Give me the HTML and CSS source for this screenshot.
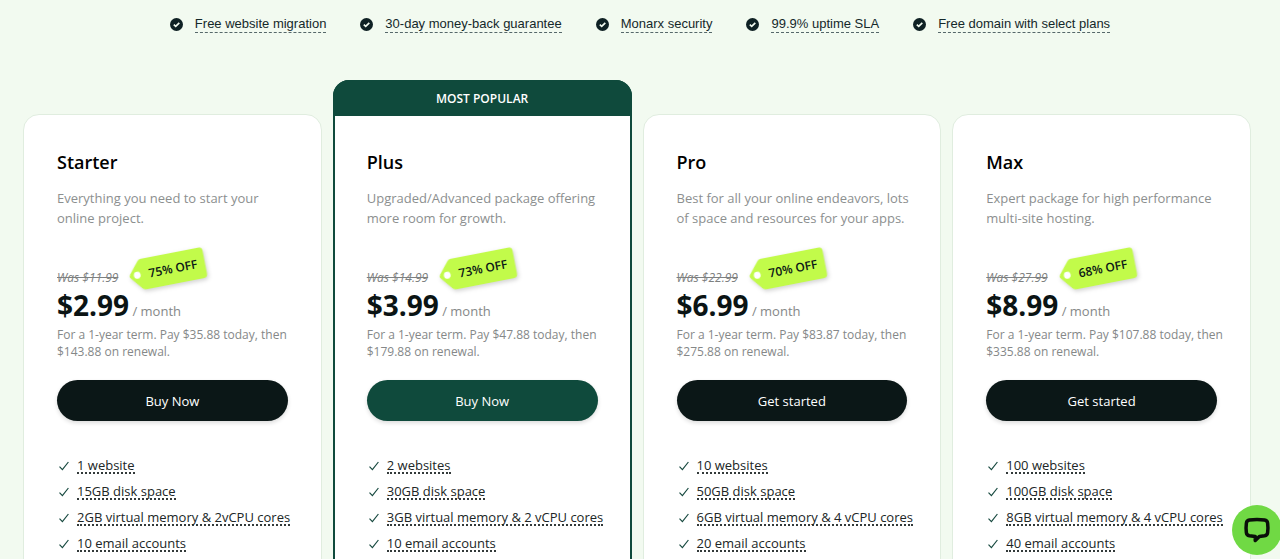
FILE: index.html
```html
<!DOCTYPE html>
<html lang="en">
<head>
<meta charset="utf-8">
<meta name="viewport" content="width=device-width, initial-scale=1">
<title>Hosting plans</title>
<link rel="stylesheet" href="styles.css">
</head>
<body>
<svg class="sprite" aria-hidden="true">
  <symbol id="badge-check" viewBox="0 0 13 13">
    <circle cx="6.5" cy="6.5" r="6.5" fill="#0f2124"/>
    <path d="M3.800 6.700l1.900 1.700L9.300 4.900" fill="none" stroke="#f2faf0" stroke-width="1.700"/>
  </symbol>
  <symbol id="tick" viewBox="0 0 12 12">
    <path d="M1.500 6.600l2.900 3L10.400 2" fill="none" stroke="#17493f" stroke-width="1.200"/>
  </symbol>
  <symbol id="tag" viewBox="0 0 76 32">
    <path d="M14.500 1H72q3.500 0 3.500 3.500V27.500q0 3.500-3.500 3.500H14.500q-2 0-3.300-1.700L1.800 18q-1.600-2 0-4L11.200 2.700q1.300-1.700 3.300-1.700z" fill="#c2fb4a"/>
    <circle cx="8.500" cy="16" r="3.300" fill="#fff"/>
  </symbol>
</svg>
<ul class="perks">
  <li><svg><use href="#badge-check"/></svg><span>Free website migration</span></li>
  <li><svg><use href="#badge-check"/></svg><span>30-day money-back guarantee</span></li>
  <li><svg><use href="#badge-check"/></svg><span>Monarx security</span></li>
  <li><svg><use href="#badge-check"/></svg><span>99.9% uptime SLA</span></li>
  <li><svg><use href="#badge-check"/></svg><span>Free domain with select plans</span></li>
</ul>
<main class="plans">
  <section class="plan">
    <h2>Starter</h2>
    <p class="summary">Everything you need to start your online project.</p>
    <div class="deal"><s>Was $11.99</s><span class="tag"><svg><use href="#tag"/></svg><b>75% OFF</b></span></div>
    <p class="price"><strong>$2.99</strong> / month</p>
    <p class="term">For a 1-year term. Pay $35.88 today, then $143.88 on renewal.</p>
    <button class="buy" type="button">Buy Now</button>
    <ul class="features">
      <li><svg><use href="#tick"/></svg><span>1 website</span></li>
      <li><svg><use href="#tick"/></svg><span>15GB disk space</span></li>
      <li><svg><use href="#tick"/></svg><span>2GB virtual memory &amp; 2vCPU cores</span></li>
      <li><svg><use href="#tick"/></svg><span>10 email accounts</span></li>
    </ul>
  </section>
  <section class="plan popular">
    <p class="ribbon">MOST POPULAR</p>
    <h2>Plus</h2>
    <p class="summary">Upgraded/Advanced package offering more room for growth.</p>
    <div class="deal"><s>Was $14.99</s><span class="tag"><svg><use href="#tag"/></svg><b>73% OFF</b></span></div>
    <p class="price"><strong>$3.99</strong> / month</p>
    <p class="term">For a 1-year term. Pay $47.88 today, then $179.88 on renewal.</p>
    <button class="buy" type="button">Buy Now</button>
    <ul class="features">
      <li><svg><use href="#tick"/></svg><span>2 websites</span></li>
      <li><svg><use href="#tick"/></svg><span>30GB disk space</span></li>
      <li><svg><use href="#tick"/></svg><span>3GB virtual memory &amp; 2 vCPU cores</span></li>
      <li><svg><use href="#tick"/></svg><span>10 email accounts</span></li>
    </ul>
  </section>
  <section class="plan">
    <h2>Pro</h2>
    <p class="summary">Best for all your online endeavors, lots of space and resources for your apps.</p>
    <div class="deal"><s>Was $22.99</s><span class="tag"><svg><use href="#tag"/></svg><b>70% OFF</b></span></div>
    <p class="price"><strong>$6.99</strong> / month</p>
    <p class="term">For a 1-year term. Pay $83.87 today, then $275.88 on renewal.</p>
    <button class="buy" type="button">Get started</button>
    <ul class="features">
      <li><svg><use href="#tick"/></svg><span>10 websites</span></li>
      <li><svg><use href="#tick"/></svg><span>50GB disk space</span></li>
      <li><svg><use href="#tick"/></svg><span>6GB virtual memory &amp; 4 vCPU cores</span></li>
      <li><svg><use href="#tick"/></svg><span>20 email accounts</span></li>
    </ul>
  </section>
  <section class="plan">
    <h2>Max</h2>
    <p class="summary">Expert package for high performance multi-site hosting.</p>
    <div class="deal"><s>Was $27.99</s><span class="tag"><svg><use href="#tag"/></svg><b>68% OFF</b></span></div>
    <p class="price"><strong>$8.99</strong> / month</p>
    <p class="term">For a 1-year term. Pay $107.88 today, then $335.88 on renewal.</p>
    <button class="buy" type="button">Get started</button>
    <ul class="features">
      <li><svg><use href="#tick"/></svg><span>100 websites</span></li>
      <li><svg><use href="#tick"/></svg><span>100GB disk space</span></li>
      <li><svg><use href="#tick"/></svg><span>8GB virtual memory &amp; 4 vCPU cores</span></li>
      <li><svg><use href="#tick"/></svg><span>40 email accounts</span></li>
    </ul>
  </section>
</main>
<button class="chat" type="button" aria-label="Open chat">
  <svg viewBox="0 0 24 24"><path d="M5.500 3.500Q12 2.500 18.500 3.500q2.300.4 2.600 2.600.6 4.400 0 8.300-.3 2.100-2.600 2.600l-4.500.6L10.500 21v-3.400l-5-.6q-2.300-.5-2.600-2.600-.6-3.900 0-8.300.3-2.200 2.600-2.600z" fill="none" stroke="#0a0f0a" stroke-width="3" stroke-linejoin="round"/></svg>
</button>
</body>
</html>
```
FILE: styles.css
```css
* { box-sizing: border-box; }
body {
  margin: 0;
  height: 100vh;
  overflow: hidden;
  background: #f2faf0;
  color: #0b1717;
  font-family: "Open Sans", "Noto Sans", sans-serif;
  font-size: 13px;
}
h2, p, ul { margin: 0; padding: 0; }
ul { list-style: none; }
.sprite { position: absolute; width: 0; height: 0; }

.perks {
  display: flex;
  justify-content: center;
  gap: 34px;
  padding: 16px 24px 0;
  font-family: "Liberation Sans", Arial, sans-serif;
  font-size: 13px;
  line-height: 16px;
  color: #14282a;
}
.perks li { display: flex; align-items: center; gap: 12px; white-space: nowrap; }
.perks svg { width: 13px; height: 13px; }
.perks span { border-bottom: 1px dashed #56686a; }

.plans {
  display: grid;
  grid-template-columns: repeat(4, minmax(0, 1fr));
  gap: 11px;
  padding: 47px 29px 0 23px;
}
.plan {
  margin-top: 34px;
  padding: 33px 33px 40px;
  background: #fff;
  border: 1px solid #e0eddf;
  border-radius: 16px;
}
.popular {
  margin-top: 0;
  padding: 0 32px 40px;
  border: 2px solid #0f4a3c;
}
.ribbon {
  margin: -2px -34px 32px;
  padding: 3px 0 1px;
  border-radius: 16px 16px 0 0;
  background: #0f4a3c;
  color: #fff;
  font-size: 12px;
  font-weight: 600;
  line-height: 32px;
  text-align: center;
}
h2 { font-size: 18px; font-weight: 600; line-height: 28px; color: #000; }
.summary {
  min-height: 40px;
  margin: 12px -8px 0 0;
  color: #8c8f8f;
  line-height: 20px;
}
.deal { display: flex; align-items: flex-end; gap: 10px; height: 58px; white-space: nowrap; }
.deal s { color: #7d8080; font-size: 12px; font-style: italic; line-height: 17px; }
.tag { display: grid; place-items: center; transform: rotate(-11deg); }
.tag svg, .tag b { grid-area: 1 / 1; }
.tag svg { width: 78px; height: 33px; filter: drop-shadow(1px 2px 2px rgb(0 0 0 / 18%)); }
.tag b { z-index: 1; padding-left: 12px; font-size: 12px; font-weight: 600; }
.price { padding-top: 3px; color: #858888; line-height: 16px; white-space: nowrap; }
.price strong { color: #0b1414; font-size: 28px; font-weight: 700; line-height: 32px; }
.term { min-height: 34px; margin: 5px -8px 0 0; color: #858888; font-size: 12px; line-height: 17px; }
.buy {
  display: block;
  width: 100%;
  height: 41px;
  margin-top: 20px;
  border: 0;
  border-radius: 21px;
  background: #0b1717;
  color: #fff;
  font: inherit;
  box-shadow: 0 2px 4px rgb(0 0 0 / 14%);
}
.popular .buy { background: #0f4a3c; }
.features { margin-top: 32px; color: #202626; }
.features li { display: flex; align-items: center; gap: 7px; height: 26px; white-space: nowrap; }
.features svg { flex: none; width: 12px; height: 12px; margin-left: 1px; }
.features span { border-bottom: 2px dotted #333a3a; line-height: 14px; }

.chat {
  position: fixed;
  right: -2px;
  bottom: 4px;
  display: grid;
  place-items: center;
  width: 50px;
  height: 50px;
  padding: 0;
  border: 0;
  border-radius: 50%;
  background: #70d944;
}
.chat svg { width: 28px; height: 28px; }
```
